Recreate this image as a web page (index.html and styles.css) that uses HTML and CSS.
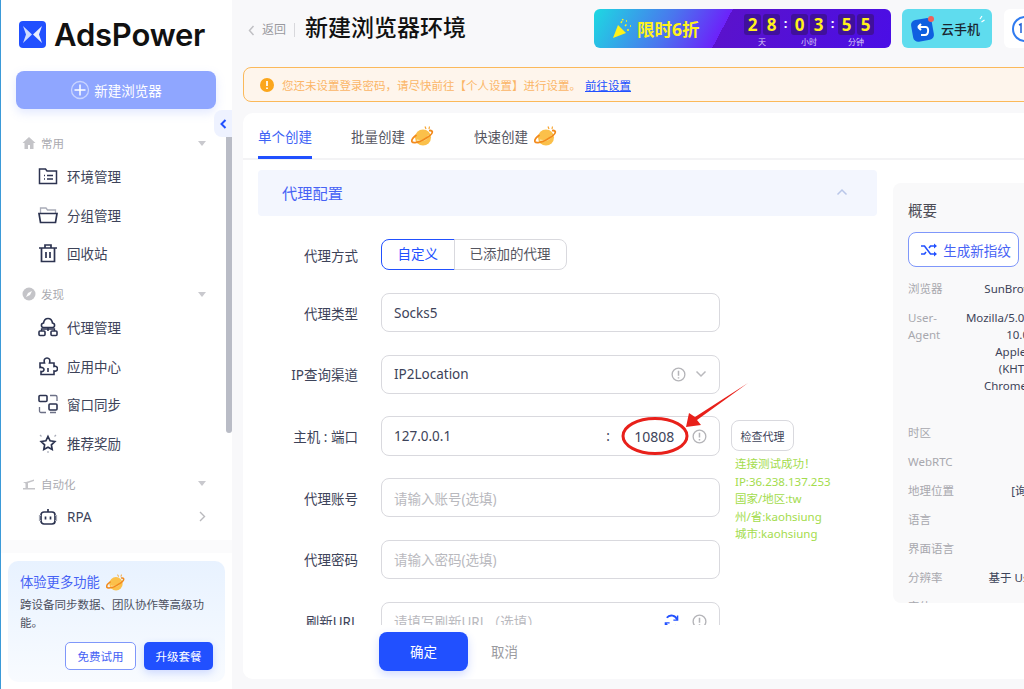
FILE: index.html
```html
<!DOCTYPE html>
<html lang="zh-CN">
<head>
    <meta charset="UTF-8">
    <meta name="viewport" content="width=device-width, initial-scale=1.0">
    <title>AdsPower</title>
    <link rel="stylesheet" href="styles.css">
</head>
<body>

<svg class="defs" width="0" height="0">
    <symbol id="planet" viewBox="0 0 24 20">
        <circle cx="12" cy="11.500" r="8" fill="#fbc04a"/>
        <path d="M6 14c2 1 4 1 7 0s4-3 5-5" fill="none" stroke="#fbe09a" stroke-width="1.500"/>
        <path d="M5.500 9C2 11.500.3 14 1 15.700c1 1.700 6.500.8 11.500-2s9.500-6.200 8.700-8.200C20.700 4.500 19.500 4.300 18 4.700" fill="none" stroke="#f28a1c" stroke-width="1.800"/>
        <path d="M15 3l-1-2.500M18 3l.5-2.500" stroke="#f7a531" stroke-width="1.200" fill="none"/>
    </symbol>
    <symbol id="info" viewBox="0 0 16 16">
        <circle cx="8" cy="8" r="6.800" fill="none" stroke="#b4b4b8" stroke-width="1.400"/>
        <path d="M8 4v5.200M8 10.800v1.400" stroke="#b4b4b8" stroke-width="1.600" fill="none"/>
    </symbol>
    <symbol id="chev-down" viewBox="0 0 12 8">
        <path d="M1.500 1.500L6 6l4.500-4.500" fill="none" stroke="#b9b9bd" stroke-width="1.500"/>
    </symbol>
</svg>

<aside class="sidebar">
    <div class="logo">
        <svg class="logo-mark" viewBox="0 0 27 27">
            <rect width="27" height="27" rx="4" fill="#2150ff"/>
            <path d="M4 5l9 8.500L4 22l3-8.500z" fill="#cfdcff"/>
            <path d="M23 5l-9 8.500L23 22l-3-8.500z" fill="#e9efff"/>
        </svg>
        <span class="logo-text">AdsPower</span>
    </div>
    <button class="new-btn">
        <svg width="20" height="20" viewBox="0 0 20 20">
            <circle cx="10" cy="10" r="8.500" fill="none" stroke="#c9d4ff" stroke-width="1.300"/>
            <path d="M10 4.500v11M4.500 10h11" stroke="#fff" stroke-width="1.500"/>
        </svg>
        新建浏览器
    </button>
    <div class="collapse-tab">
        <svg width="7" height="10" viewBox="0 0 7 10"><path d="M5.500 1L1.500 5l4 4" fill="none" stroke="#2150ff" stroke-width="2"/></svg>
    </div>

    <nav class="nav">
        <div class="scroll-thumb"></div>

        <div class="group">
            <svg class="group-icon" viewBox="0 0 14 14"><path d="M7 1L0.500 7H2.500v6h3.500V9h2v4h3.500V7h2z" fill="#c4c4c8"/></svg>
            <span>常用</span><i class="caret"></i>
        </div>
        <a class="item">
            <svg class="item-icon" viewBox="0 0 20 20"><path d="M1.500 3h6l1.500 2h9.500v12.500h-17z M6 9.500h1M9 9.500h6M6 13h1M9 13h6" fill="none" stroke="#2c3350" stroke-width="1.500"/></svg>
            环境管理
        </a>
        <a class="item">
            <svg class="item-icon" viewBox="0 0 20 20"><path d="M2.500 8V3h5.500l1.500 2h8v3" fill="none" stroke="#a9acb8" stroke-width="1.300"/><path d="M1 8.500h18l-1.500 9h-15z" fill="none" stroke="#2c3350" stroke-width="1.700"/></svg>
            分组管理
        </a>
        <a class="item">
            <svg class="item-icon" viewBox="0 0 20 20"><path d="M1 5h18M7 5V2h6v3M3.500 5v13.500h13V5M8 9v6M12 9v6" fill="none" stroke="#2c3350" stroke-width="1.700"/></svg>
            回收站
        </a>

        <div class="group group-next">
            <svg class="group-icon" viewBox="0 0 14 14"><circle cx="7" cy="7" r="6.500" fill="#c4c4c8"/><path d="M10 4L8 8 4 10l2-4z" fill="#fff"/></svg>
            <span>发现</span><i class="caret"></i>
        </div>
        <a class="item">
            <svg class="item-icon" viewBox="0 0 20 20"><path d="M5.500 10.500C3 10.500 2.500 6.500 5.500 6 6 3 8 1.500 10 1.500S14 3 14.500 6c3 .5 2.500 4.500 0 4.500z M10 10.500V14" fill="none" stroke="#2c3350" stroke-width="1.600"/><rect x="1" y="14" width="6" height="4.500" rx="1" fill="none" stroke="#2c3350" stroke-width="1.600"/><rect x="13" y="14" width="6" height="4.500" rx="1" fill="none" stroke="#2c3350" stroke-width="1.600"/><path d="M3.500 14v-2h13v2" fill="none" stroke="#2c3350" stroke-width="1.300"/></svg>
            代理管理
        </a>
        <a class="item">
            <svg class="item-icon" viewBox="0 0 20 20"><path d="M2 7h4.500C5.500 3.500 7 2 9 2s3.500 1.500 2.500 5H16v3.500c2.500-.8 3.500.8 3.500 2.200s-1 3-3.500 2.300V18.500H3v-3c2 .5 3-1 3-2s-1.500-2.500-4-2z M10 12v4" fill="none" stroke="#2c3350" stroke-width="1.600"/></svg>
            应用中心
        </a>
        <a class="item">
            <svg class="item-icon" viewBox="0 0 20 20"><rect x="1" y="1.500" width="8" height="6" rx="1" fill="none" stroke="#2c3350" stroke-width="1.600"/><rect x="11" y="10" width="8" height="6" rx="1" fill="none" stroke="#2c3350" stroke-width="1.600"/><path d="M12 1.500h5.500a1.500 1.500 0 0 1 1.500 1.500v4M8 18.500H3a1.500 1.500 0 0 1-1.500-1.500v-4M12 18.500h6" fill="none" stroke="#6d7187" stroke-width="1.300"/></svg>
            窗口同步
        </a>
        <a class="item">
            <svg class="item-icon" viewBox="0 0 20 20"><path d="M10 3.500l2.100 4.300 4.700.7-3.400 3.300.8 4.700-4.200-2.200-4.200 2.200.8-4.700-3.400-3.300 4.700-.7z" fill="none" stroke="#2c3350" stroke-width="1.700"/><path d="M2 2l1.500 1.500M18 2l-1.500 1.500M10 18v2" stroke="#a9acb8" stroke-width="1.200"/></svg>
            推荐奖励
        </a>

        <div class="group group-next">
            <svg class="group-icon" viewBox="0 0 14 14"><path d="M1 12.500h12v-1.500H6V6l6-2V2.500L4 5H1l2.500 1.500v4.500H1z" fill="#c4c4c8"/></svg>
            <span>自动化</span><i class="caret"></i>
        </div>
        <a class="item">
            <svg class="item-icon" viewBox="0 0 20 20"><rect x="3" y="5" width="14" height="12" rx="3" fill="none" stroke="#2c3350" stroke-width="1.700"/><path d="M10 2v3M7.500 9.500v3M12.500 9.500v3" stroke="#2c3350" stroke-width="1.700"/><path d="M3 8.500H1.500v5H3M17 8.500h1.500v5H17" fill="none" stroke="#a9acb8" stroke-width="1.200"/></svg>
            RPA
            <svg class="item-arrow" width="7" height="11" viewBox="0 0 7 11"><path d="M1 1l4.500 4.500L1 10" fill="none" stroke="#b9b9bd" stroke-width="1.400"/></svg>
        </a>
    </nav>

    <div class="promo-wrap">
        <div class="promo">
            <div class="promo-title">体验更多功能 <svg width="20" height="17"><use href="#planet"/></svg></div>
            <p class="promo-desc">跨设备同步数据、团队协作等高级功能。</p>
            <div class="promo-btns">
                <button class="btn-outline">免费试用</button>
                <button class="btn-solid">升级套餐</button>
            </div>
        </div>
    </div>
</aside>

<main class="main">
    <header class="topbar">
        <svg class="back-icon" width="7" height="11" viewBox="0 0 7 11"><path d="M5.500 1L1.500 5.500l4 4.500" fill="none" stroke="#c0c0c4" stroke-width="1.500"/></svg>
        <span class="back">返回</span>
        <span class="title">新建浏览器环境</span>

        <div class="sale">
            <svg class="popper" width="21" height="21" viewBox="0 0 21 21">
                <path d="M6 7l8 8-13 5z" fill="#fff21a"/>
                <path d="M9 5l2-4M13 8l2-2M15 12l3 0M14 3l1 0M18 8h1" stroke="#fff21a" stroke-width="1.500" stroke-dasharray="2 1"/>
            </svg>
            <span class="sale-text">限时6折</span>
            <div class="count">
                <div class="count-unit">
                    <div class="digits"><b>2</b><b>8</b></div>
                    <small>天</small>
                </div>
                <span class="colon">:</span>
                <div class="count-unit">
                    <div class="digits"><b>0</b><b>3</b></div>
                    <small>小时</small>
                </div>
                <span class="colon">:</span>
                <div class="count-unit">
                    <div class="digits"><b>5</b><b>5</b></div>
                    <small>分钟</small>
                </div>
            </div>
        </div>

        <div class="cloud">
            <svg width="26" height="28" viewBox="0 0 26 28">
                <rect x="2" y="4" width="21" height="22" rx="5" fill="#0f5fe0" transform="rotate(-10 12 15)"/>
                <path d="M8 12h8c3 0 3 8-1 8h-4M8 12l3-3M8 12l3 3" fill="none" stroke="#fff" stroke-width="2"/>
                <circle cx="21" cy="4" r="3" fill="#f0605a"/>
            </svg>
            <span>云手机</span>
            <svg class="cloud-spark" width="9" height="9" viewBox="0 0 9 9"><path d="M6 1L4 4M8.500 5L5.500 7" stroke="#fff" stroke-width="1.200"/></svg>
        </div>

        <div class="support">
            <svg width="28" height="28" viewBox="0 0 28 28"><circle cx="14" cy="14" r="12" fill="none" stroke="#2f7bf0" stroke-width="2"/><path d="M8 10l2-1v9" fill="none" stroke="#1f5fd8" stroke-width="1.500"/></svg>
        </div>
    </header>

    <div class="alert">
        <svg width="14" height="14" viewBox="0 0 14 14"><circle cx="7" cy="7" r="7" fill="#fba61c"/><path d="M7 3v5M7 9.500v1.500" stroke="#fff" stroke-width="1.700"/></svg>
        <span>您还未设置登录密码，请尽快前往【个人设置】进行设置。</span>
        <a class="alert-link">前往设置</a>
    </div>

    <section class="card">
        <div class="tabs">
            <a class="tab tab-active">单个创建</a>
            <a class="tab">批量创建 <svg width="24" height="20"><use href="#planet"/></svg></a>
            <a class="tab">快速创建 <svg width="24" height="20"><use href="#planet"/></svg></a>
        </div>

        <div class="content">
            <div class="left">
                <div class="section-head">
                    代理配置
                    <svg width="12" height="8" viewBox="0 0 12 8"><path d="M1.500 6.500L6 2l4.500 4.500" fill="none" stroke="#b9c6e8" stroke-width="1.500"/></svg>
                </div>

                <div class="form">
                    <label>代理方式</label>
                    <div class="toggle">
                        <span class="toggle-on">自定义</span>
                        <span class="toggle-off">已添加的代理</span>
                    </div>
                    <div class="side"></div>

                    <label>代理类型</label>
                    <div class="field">Socks5</div>
                    <div class="side"></div>

                    <label>IP查询渠道</label>
                    <div class="field">IP2Location
                        <svg class="push" width="15" height="15"><use href="#info"/></svg>
                        <svg width="12" height="8"><use href="#chev-down"/></svg>
                    </div>
                    <div class="side"></div>

                    <label>主机 : 端口</label>
                    <div class="field field-host">
                        <span class="host">127.0.0.1</span>
                        <span class="host-sep">:</span>
                        <span class="port">10808</span>
                        <svg width="15" height="15"><use href="#info"/></svg>
                    </div>
                    <div class="side side-check">
                        <button class="check-btn">检查代理</button>
                        <p class="check-ok">连接测试成功！<br>IP:36.238.137.253<br>国家/地区:tw<br>州/省:kaohsiung<br>城市:kaohsiung</p>
                    </div>

                    <label>代理账号</label>
                    <div class="field field-empty">请输入账号(选填)</div>

                    <label>代理密码</label>
                    <div class="field field-empty">请输入密码(选填)</div>

                    <label>刷新URL</label>
                    <div class="field field-empty">请填写刷新URL（选填）
                        <svg class="push refresh" width="15" height="15" viewBox="0 0 16 16"><path d="M14 6A6.300 6.300 0 0 0 3 4M2 10a6.300 6.300 0 0 0 11 2" fill="none" stroke="#2150ff" stroke-width="2"/><path d="M14.500 1.500V6.500H10M1.500 14.500V9.500H6" fill="none" stroke="#2150ff" stroke-width="1.500"/></svg>
                        <svg width="15" height="15"><use href="#info"/></svg>
                    </div>
                    <div class="side"></div>
                </div>
            </div>

            <div class="summary">
                <h3>概要</h3>
                <button class="gen-btn">
                    <svg width="18" height="14" viewBox="0 0 18 14"><path d="M1 3h3.500l6 8H16M1 11h3.500l1.500-2M9 5l1.500-2H16" fill="none" stroke="#2150ff" stroke-width="1.600"/><path d="M14 0.500L17 3l-3 2.500zM14 8.500l3 2.500-3 2.500z" fill="#2150ff"/></svg>
                    生成新指纹
                </button>
                <dl class="specs">
                    <dt>浏览器</dt><dd>SunBrowser [116]</dd>
                    <dt>User-Agent</dt><dd class="ua">Mozilla/5.0 (Windows NT<br>10.0; x64)<br>AppleWebKit/<br>(KHTML, like<br>Chrome/116.0.0.0</dd>
                    <dt>时区</dt><dd></dd>
                    <dt>WebRTC</dt><dd></dd>
                    <dt>地理位置</dt><dd>[询问]IP</dd>
                    <dt>语言</dt><dd></dd>
                    <dt>界面语言</dt><dd></dd>
                    <dt>分辨率</dt><dd>基于 User-Agent</dd>
                    <dt>字体</dt><dd></dd>
                </dl>
            </div>
        </div>

        <footer class="actions">
            <button class="ok">确定</button>
            <a class="cancel">取消</a>
        </footer>
    </section>
</main>

<!-- 红色标注 -->
<svg class="mark" width="150" height="90" viewBox="0 0 150 90">
    <ellipse cx="40" cy="56" rx="32" ry="17.500" fill="none" stroke="#e8201a" stroke-width="3"/>
    <path d="M133 3L80 37l-6-4-3 14 15-2-4-5z" fill="#e8201a"/>
</svg>

</body>
</html>
```

FILE: styles.css
```css
* {
    box-sizing: border-box;
}

html, body {
    height: 100%;
}

body {
    margin: 0;
    display: flex;
    height: 689px;
    overflow: hidden;
    font-family: "Noto Sans", "Noto Sans CJK SC", sans-serif;
    font-size: 13.5px;
    color: #3d4359;
    background-color: #f8f8fa;
    position: relative;
}

button {
    font-family: inherit;
    cursor: pointer;
}

.defs {
    position: absolute;
}

/* 左侧栏 */
.sidebar {
    width: 232px;
    flex-shrink: 0;
    background-color: white;
    border-left: 1px solid #3b9ad8;
    display: flex;
    flex-direction: column;
    position: relative;
}

.logo {
    display: flex;
    align-items: center;
    gap: 8px;
    height: 27px;
    margin: 21px 0 0 18px;
}

.logo-mark {
    width: 27px;
    height: 27px;
}

.logo-text {
    font-family: Inter, sans-serif;
    font-size: 31px;
    font-weight: 600;
    color: #111;
    letter-spacing: -0.2px;
}

.new-btn {
    margin: 23px 0 0 15px;
    width: 200px;
    height: 38px;
    border: none;
    border-radius: 8px;
    background-color: #8fa6ff;
    color: white;
    font-size: 13.5px;
    display: flex;
    align-items: center;
    justify-content: center;
    gap: 4px;
    box-shadow: 0 4px 10px rgba(143, 166, 255, 0.25);
}

.collapse-tab {
    position: absolute;
    left: 213px;
    top: 110px;
    width: 18px;
    height: 27px;
    background-color: #eef2ff;
    border-radius: 8px 0 0 8px;
    display: flex;
    align-items: center;
    justify-content: center;
}

.nav {
    flex: 1;
    padding-top: 25px;
    position: relative;
    overflow: hidden;
}

.scroll-thumb {
    position: absolute;
    left: 225px;
    top: 28px;
    width: 6px;
    height: 296px;
    background-color: #b9bcc6;
    border-radius: 0 0 3px 3px;
}

.group {
    display: flex;
    align-items: center;
    height: 18px;
    padding: 0 26px 0 21px;
    font-size: 11.500px;
    color: #aaaab0;
}

.group-next {
    margin-top: 13px;
}

.group-icon {
    width: 14px;
    height: 14px;
    margin-right: 5px;
}

.caret {
    margin-left: auto;
    border: 4px solid transparent;
    border-top: 5px solid #c9c9ce;
    border-bottom: none;
}

.group + .item {
    margin-top: 5px;
}

.item {
    height: 38.400px;
    display: flex;
    align-items: center;
    padding: 0 26px 0 37px;
    color: #3d4359;
}

.item-icon {
    width: 20px;
    height: 20px;
    margin-right: 9px;
}

.item-arrow {
    margin-left: auto;
}

.promo-wrap {
    height: 149px;
    padding: 8px 7px 7px;
    border-top: 13px solid #fbfbfc;
}

.promo {
    height: 121px;
    padding: 12px 12px 0;
    border-radius: 10px;
    background: linear-gradient(180deg, #e8f2ff, #f8fbff);
}

.promo-title {
    display: flex;
    align-items: center;
    gap: 6px;
    color: #4662f5;
    font-size: 13.300px;
    line-height: 18px;
}

.promo-desc {
    margin: 5px 0 0;
    font-size: 11.500px;
    line-height: 18px;
    color: #4c5060;
}

.promo-btns {
    display: flex;
    justify-content: flex-end;
    gap: 8px;
    margin-top: 10px;
}

.btn-outline, .btn-solid {
    height: 28px;
    border-radius: 5px;
    font-size: 11.500px;
}

.btn-outline {
    width: 71px;
    background-color: white;
    border: 1px solid #7f97fa;
    color: #4662f5;
}

.btn-solid {
    width: 69px;
    background-color: #2150ff;
    border: none;
    color: white;
    box-shadow: 0 3px 8px rgba(33, 80, 255, 0.2);
}

/* 主区域 */
.main {
    flex: 1;
    min-width: 0;
    padding: 9px 0 10px 11px;
    display: flex;
    flex-direction: column;
    overflow: hidden;
}

.topbar {
    display: flex;
    align-items: center;
    height: 39px;
    flex-shrink: 0;
    padding-left: 5px;
}

.topbar > * {
    flex-shrink: 0;
}

.back-icon {
    margin-right: 7px;
    margin-top: 3px;
}

.back {
    font-size: 12px;
    color: #9a9a9f;
    padding-right: 8px;
    border-right: 1px solid #d8d8dc;
    line-height: 14px;
    margin-top: 3px;
    white-space: nowrap;
}

.title {
    margin-left: 8px;
    font-size: 23px;
    font-weight: 500;
    line-height: 30px;
    color: #111;
    width: 291px;
    padding-left: 2px;
    white-space: nowrap;
    margin-top: -4px;
}

.sale {
    width: 297px;
    height: 39px;
    border-radius: 6px;
    display: flex;
    align-items: center;
    padding-left: 18px;
    background: linear-gradient(118deg, #1dd9e2 0, #4a76ee 26%, #6c22fa 43.700%, #5a12cc 43.700%, #4a0ee6 100%);
}

.popper {
    margin-right: 4px;
}

.sale-text {
    color: #fff21a;
    font-size: 17.500px;
    font-weight: 700;
    width: 107px;
}

.count {
    display: flex;
    align-items: flex-start;
    height: 39px;
    padding-top: 5px;
}

.count-unit {
    display: flex;
    flex-direction: column;
    align-items: center;
}

.digits {
    display: flex;
    gap: 2px;
}

.digits b {
    width: 17px;
    height: 21px;
    background-color: #40109c;
    border-radius: 3px;
    color: #fff21a;
    font-size: 17px;
    line-height: 21px;
    text-align: center;
}

.count-unit small {
    font-size: 8px;
    line-height: 11px;
    margin-top: 1px;
    color: #d9cdf5;
}

.colon {
    width: 11px;
    text-align: center;
    color: white;
    font-weight: 700;
    font-size: 13px;
    line-height: 18px;
}

.cloud {
    position: relative;
    width: 90px;
    height: 39px;
    margin-left: 11px;
    border-radius: 6px;
    background-color: #5fdcee;
    display: flex;
    align-items: center;
    gap: 5px;
    padding-left: 8px;
    font-size: 13px;
    font-weight: 500;
    color: #1a2530;
}

.cloud-spark {
    position: absolute;
    right: 7px;
    top: 6px;
}

.support {
    width: 60px;
    height: 39px;
    margin-left: 12px;
    padding-left: 7px;
    background-color: white;
    border-radius: 6px;
    display: flex;
    align-items: center;
}

.alert {
    flex-shrink: 0;
    margin-top: 19px;
    height: 35px;
    width: 800px;
    display: flex;
    align-items: center;
    gap: 8px;
    padding-left: 16px;
    background-color: #fef5ec;
    border: 1px solid #fbb95a;
    border-radius: 8px 0 0 8px;
    font-size: 11.500px;
    color: #fbb567;
}

.alert-link {
    margin-left: -4px;
    color: #2150ff;
    text-decoration: underline;
}

.card {
    flex-shrink: 0;
    width: 800px;
    height: 566px;
    margin-top: 11px;
    background-color: white;
    border-radius: 10px 0 0 10px;
    display: flex;
    flex-direction: column;
    overflow: hidden;
}

.tabs {
    display: flex;
    height: 47px;
    flex-shrink: 0;
    gap: 39px;
    padding-left: 15px;
    border-bottom: 2px solid #f3f3f5;
}

.tab {
    display: flex;
    align-items: center;
    gap: 6px;
    height: 46px;
    padding-top: 3px;
    border-bottom: 3px solid transparent;
    color: #55555f;
}

.tab-active {
    color: #3d62f5;
    border-bottom-color: #2150ff;
}

.content {
    flex: 1;
    min-height: 0;
    display: flex;
    gap: 16px;
    padding: 10px 0 0 15px;
    overflow: hidden;
}

.left {
    width: 619px;
    flex-shrink: 0;
}

.section-head {
    height: 46px;
    padding: 0 29px 2px 24px;
    background-color: #f3f6fe;
    border-radius: 4px;
    color: #4662f5;
    font-size: 15.250px;
    display: flex;
    align-items: center;
    justify-content: space-between;
}

.form {
    display: grid;
    grid-template-columns: 100px 339px 1fr;
    grid-template-rows: 32px repeat(6, 40px);
    column-gap: 23px;
    row-gap: 21.700px;
    margin-top: 23px;
    align-items: center;
}

.form label {
    text-align: right;
    color: #3d4359;
    white-space: nowrap;
}

.toggle {
    display: flex;
    height: 31px;
    line-height: 28px;
    align-self: start;
}

.toggle span {
    padding: 0 16px;
    border: 1px solid #d9d9de;
    white-space: nowrap;
}

.toggle .toggle-on {
    color: #2150ff;
    border-color: #2150ff;
    border-radius: 8px 0 0 8px;
    padding: 0 15.500px;
}

.toggle .toggle-off {
    margin-left: -1px;
    border-radius: 0 8px 8px 0;
    color: #55555f;
    padding: 0 15px;
}

.field {
    height: 39px;
    border: 1px solid #d9d9de;
    border-radius: 8px;
    padding: 0 12px;
    display: flex;
    align-items: center;
    gap: 9px;
    background-color: white;
    color: #3d4359;
}

.push {
    margin-left: auto;
}

.refresh {
    margin-right: 4px;
}

.field-host {
    height: 40px;
    gap: 0;
}

.host {
    width: 213px;
}

.host-sep {
    width: 28px;
}

.port {
    width: 58px;
    font-size: 14px;
}

.field-empty {
    color: #b9b9be;
}

.side-check {
    grid-row: span 3;
    align-self: start;
    margin-left: -12px;
    margin-top: 4px;
}

.check-btn {
    width: 63px;
    height: 31px;
    padding: 0;
    background-color: white;
    border: 1px solid #d9d9de;
    border-radius: 8px;
    font-size: 11px;
    color: #3d4359;
}

.check-ok {
    margin: 4px 0 0 4px;
    font-size: 11.500px;
    line-height: 17.500px;
    color: #a3dc4c;
    white-space: nowrap;
}

/* 概要 */
.summary {
    width: 260px;
    height: 420px;
    margin-top: 13px;
    flex-shrink: 0;
    padding: 0 0 0 15px;
    background-color: #f9f9fa;
    border-radius: 8px;
    overflow: hidden;
}

.summary h3 {
    margin: 17px 0 0;
    font-size: 14.500px;
    font-weight: 400;
    line-height: 20px;
    color: #4c4c55;
}

.gen-btn {
    margin-top: 12px;
    width: 111px;
    height: 35px;
    padding: 0 0 0 4px;
    background-color: white;
    border: 1px solid #7f97fa;
    border-radius: 8px;
    color: #4662f5;
    font-size: 13.5px;
    display: flex;
    align-items: center;
    justify-content: center;
    gap: 5px;
}

.specs {
    margin: 13px 0 0;
    display: grid;
    grid-template-columns: 46px 156px;
    row-gap: 12px;
    font-size: 11.500px;
    line-height: 17px;
}

.specs dt {
    color: #a8a8ae;
}

.specs dd {
    margin: 0;
    text-align: center;
    color: #3d4359;
    white-space: nowrap;
}

.specs .ua {
    padding-bottom: 18px;
}

.actions {
    height: 54px;
    flex-shrink: 0;
    background-color: white;
    padding: 0 0 2px 136px;
    display: flex;
    align-items: center;
}

.ok {
    width: 89px;
    height: 39px;
    border: none;
    border-radius: 8px;
    background-color: #2150ff;
    color: white;
    font-size: 13.5px;
    box-shadow: 0 4px 10px rgba(33, 80, 255, 0.2);
}

.cancel {
    margin-left: 23px;
    color: #9a9a9f;
    font-size: 13.5px;
}

/* 标注层 */
.mark {
    position: absolute;
    left: 615px;
    top: 380px;
}
```
